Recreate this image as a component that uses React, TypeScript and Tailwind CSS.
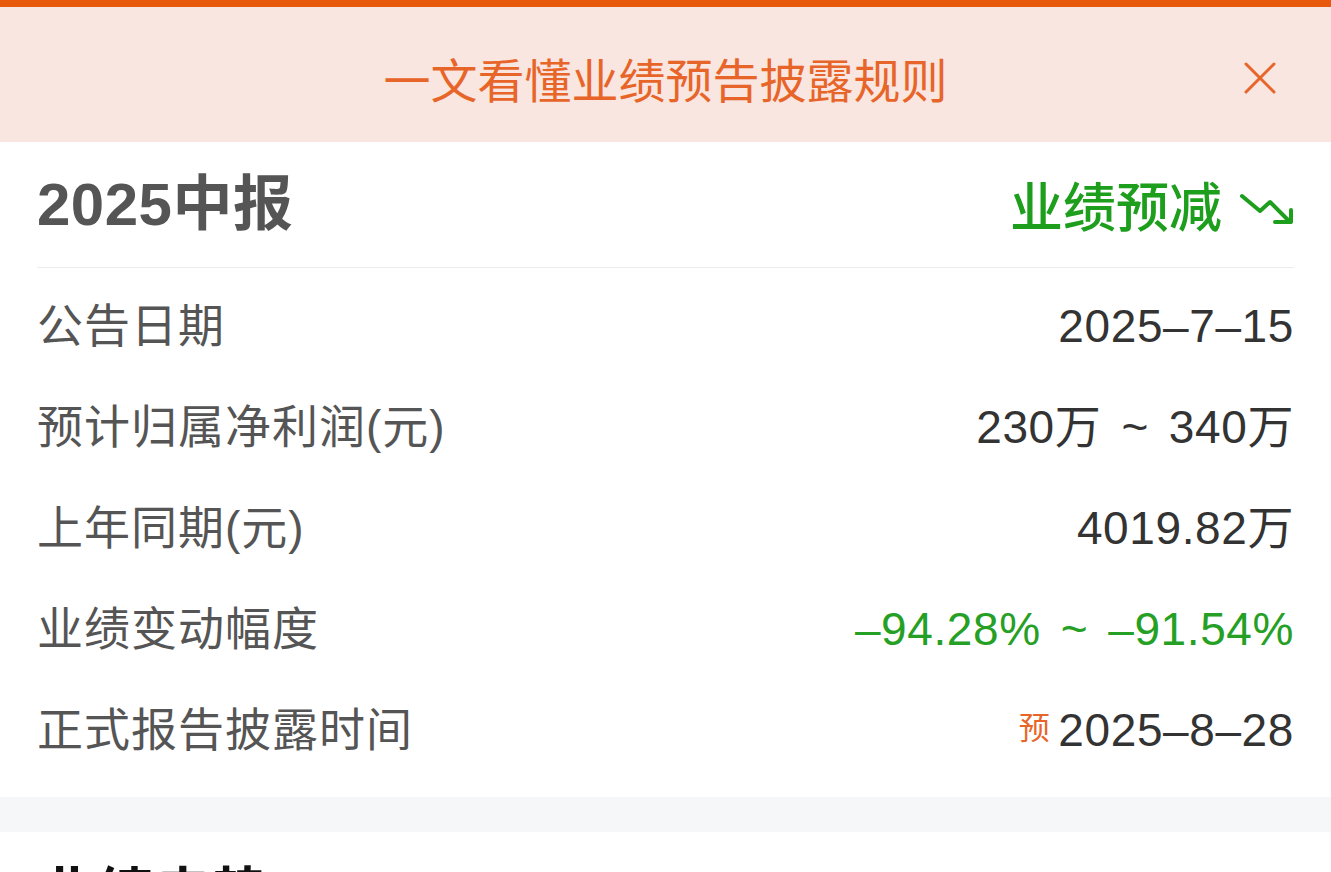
import React from 'react';

const rows: { label: string; value: string; tone?: 'green' | 'forecast' }[] = [
  { label: '公告日期', value: '2025-7-15' },
  { label: '预计归属净利润(元)', value: '230万 ~ 340万' },
  { label: '上年同期(元)', value: '4019.82万' },
  { label: '业绩变动幅度', value: '-94.28% ~ -91.54%', tone: 'green' },
  { label: '正式报告披露时间', value: '2025-8-28', tone: 'forecast' },
];

// dashes in the screenshot are rendered wide, like en dashes
const wide = (s: string) => s.replace(/-/g, '\u2013');

const RangeValue = ({ value }: { value: string }) => {
  const parts = value.split(' ~ ');
  if (parts.length < 2) return <>{wide(value)}</>;
  return (
    <>
      {wide(parts[0])}
      <span className="px-[20px]">~</span>
      {wide(parts[1])}
    </>
  );
};

const TrendDown = () => (
  <svg width="56" height="34" viewBox="0 0 56 34" fill="none" stroke="#1d9e1d" strokeWidth="4" strokeLinecap="round" strokeLinejoin="round">
    <polyline points="2,4 20,19 30,10 50,30" />
    <polyline points="35,30 51,30 51,18" />
  </svg>
);

const App: React.FC = () => {
  return (
    <div className="w-full min-h-[872px] bg-white font-['Liberation_Sans','Noto_Sans_CJK_SC',sans-serif]">
      <div className="h-[7px] bg-[#e8590c]" />

      <div className="relative h-[135px] bg-[#f9e6e0] flex items-center justify-center">
        <span className="text-[47px] leading-none text-[#e8652a] pt-[6px] font-['Noto_Sans_CJK_SC',sans-serif]">一文看懂业绩预告披露规则</span>
        <button aria-label="关闭" className="absolute right-[55px] top-[55px]">
          <svg width="32" height="32" viewBox="0 0 32 32" stroke="#e8652a" strokeWidth="3" strokeLinecap="round">
            <line x1="2" y1="2" x2="30" y2="30" />
            <line x1="30" y1="2" x2="2" y2="30" />
          </svg>
        </button>
      </div>

      <div className="px-[37px] pb-[17px]">
        <div className="h-[126px] flex items-center justify-between border-b border-[#ececec]">
          <h2 className="text-[60px] font-bold text-[#555555] leading-none tracking-[0.5px]">2025中报</h2>
          <div className="flex items-center gap-[18px] text-[#1d9e1d]">
            <span className="text-[53px] leading-none font-medium font-['Noto_Sans_CJK_SC',sans-serif]">业绩预减</span>
            <div className="pt-[8px] -mr-[2px]">
              <TrendDown />
            </div>
          </div>
        </div>

        <div className="pt-[7px]">
          {rows.map(r => (
            <div key={r.label} className="h-[101px] flex items-center justify-between">
              <span className="text-[46px] leading-none text-[#555555] tracking-[1px]">{r.label}</span>
              <span className={`flex items-center gap-[8px] text-[46px] leading-none tracking-[0.6px] ${r.tone === 'green' ? 'text-[#25a025]' : 'text-[#333333]'}`}>
                {r.tone === 'forecast' && (
                  <span className="text-[31px] text-[#e8652a] font-['Noto_Sans_CJK_SC',sans-serif] -mt-[8px]">预</span>
                )}
                <span>
                  <RangeValue value={r.value} />
                </span>
              </span>
            </div>
          ))}
        </div>
      </div>

      <div className="h-[35px] bg-[#f6f7f9]" />

      <div className="px-[38px] pt-[24px]">
        <h3 className="text-[58px] font-bold text-[#111111] leading-[1.2] font-['Noto_Sans_CJK_SC',sans-serif]">业绩走势</h3>
      </div>
    </div>
  );
};

export default App;
